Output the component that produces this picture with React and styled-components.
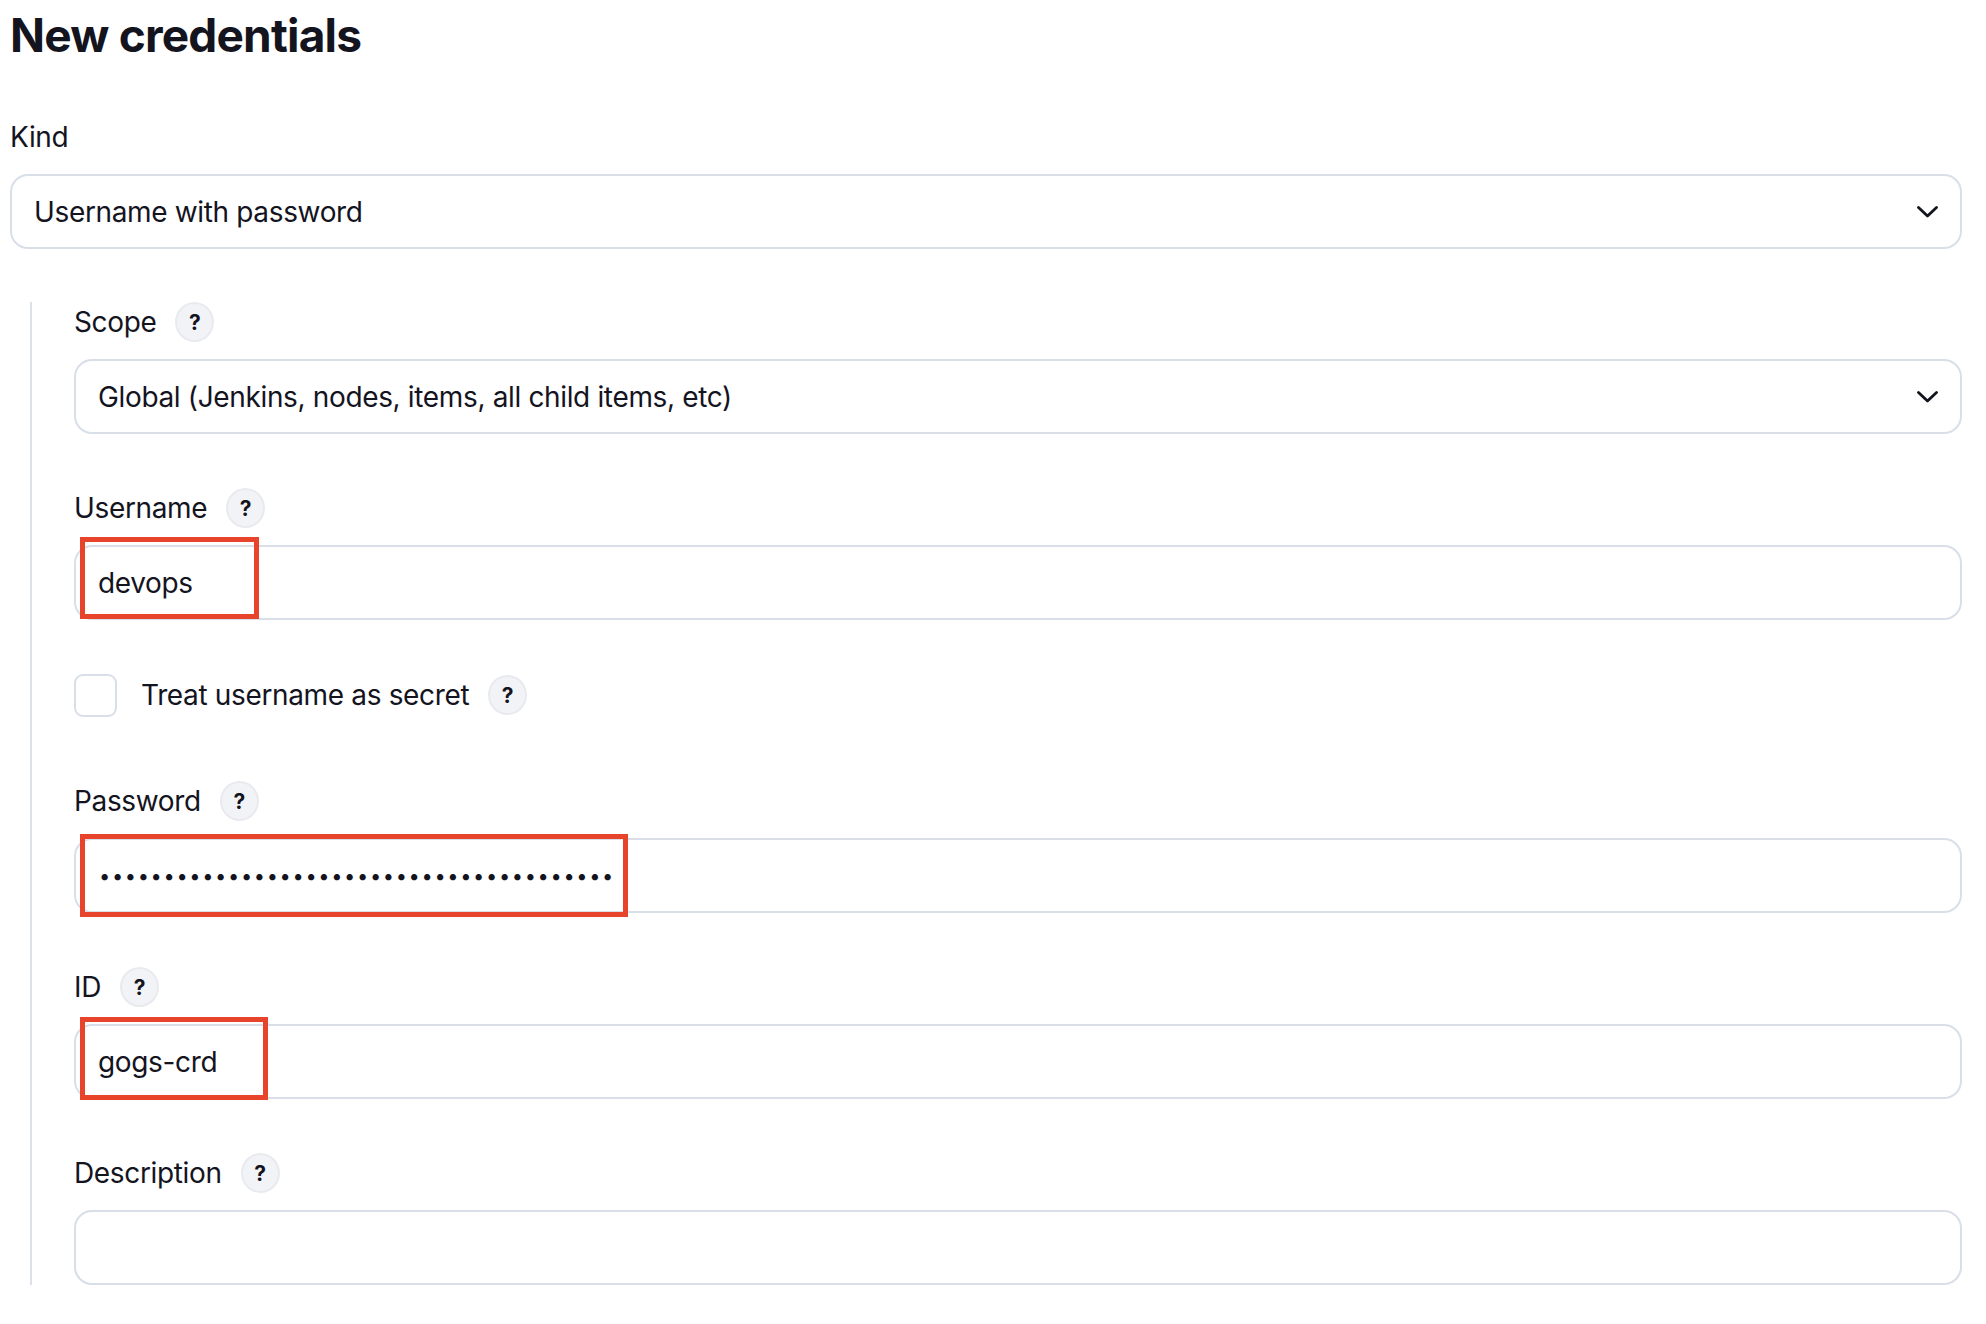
import React from 'react';
import styled, {createGlobalStyle} from 'styled-components';

const GlobalStyle = createGlobalStyle`
    html, body {
        margin: 0;
        padding: 0;
        background: #fff;
    }
    body {
        font-family: Inter, "Noto Sans", "Liberation Sans", sans-serif;
        color: #14141f;
        -webkit-font-smoothing: antialiased;
    }
    * {
        box-sizing: border-box;
    }
`

const Page = styled.main`
    padding: 7px 24px 40px 10px;
`
const Title = styled.h1`
    margin: 0 0 54px 0;
    font-size: 46px;
    font-weight: 700;
    line-height: 56px;
    letter-spacing: -0.8px;
`
const Field = styled.div`
    margin-bottom: ${props => props.gap || 54}px;
    &:last-child {
        margin-bottom: 0;
    }
`
const LabelRow = styled.div`
    display: flex;
    align-items: center;
    gap: 19px;
    height: 40px;
    margin-bottom: 17px;
    font-size: 28px;
    line-height: 40px;
    letter-spacing: -0.35px;
`
const HelpButton = styled.button`
    width: 39px;
    height: 40px;
    border-radius: 50%;
    border: 2px solid #e9eaef;
    background: #f2f3f6;
    color: #14141f;
    font-family: inherit;
    font-size: 21px;
    font-weight: 700;
    line-height: 1;
    padding: 0;
    display: flex;
    align-items: center;
    justify-content: center;
`
const SelectWrap = styled.div`
    position: relative;
`
const Select = styled.select`
    appearance: none;
    -webkit-appearance: none;
    width: 100%;
    height: 75px;
    border: 2px solid #d9dfe8;
    border-radius: 18px;
    background: #fff;
    padding: 0 60px 0 22px;
    font-family: inherit;
    font-size: 28px;
    letter-spacing: -0.35px;
    color: #14141f;
    outline: none;
`
const Chevron = styled.svg`
    position: absolute;
    right: 24px;
    top: 50%;
    margin-top: -6px;
    width: 21px;
    height: 12px;
    pointer-events: none;
`
const Nested = styled.section`
    margin-left: 20px;
    padding-left: 42px;
    border-left: 2px solid #dde2ea;
`
const InputWrap = styled.div`
    position: relative;
`
const TextInput = styled.input`
    display: block;
    width: 100%;
    height: 75px;
    border: 2px solid #d9dfe8;
    border-radius: 18px;
    background: #fff;
    padding: 0 22px;
    font-family: inherit;
    font-size: 28px;
    letter-spacing: -0.35px;
    color: #14141f;
    outline: none;
`
const PasswordInput = styled(TextInput)`
    font-size: 20px;
    letter-spacing: 1.65px;
    padding-left: 23px;
`
const Marker = styled.div`
    position: absolute;
    left: 6px;
    top: ${props => props.top}px;
    width: ${props => props.width}px;
    height: ${props => props.height}px;
    border: 5px solid #e8442c;
    pointer-events: none;
`
const CheckRow = styled.label`
    display: flex;
    align-items: center;
    height: 42px;
    font-size: 28px;
    letter-spacing: -0.35px;
`
const Checkbox = styled.input`
    appearance: none;
    -webkit-appearance: none;
    width: 43px;
    height: 43px;
    margin: 0 24px 0 0;
    border: 2px solid #d9dfe8;
    border-radius: 9px;
    background: #fff;
`
const CheckText = styled.span`
    margin-right: 19px;
`

const ChevronIcon = () => (
    <Chevron viewBox="0 0 21 12" fill="none">
        <polyline points="1.5,1.5 10.5,10 19.5,1.5" stroke="#14141f" strokeWidth="2.8" strokeLinecap="round" strokeLinejoin="round" />
    </Chevron>
);

const Label = ({text, help = true}) => (
    <LabelRow>
        <span>{text}</span>
        {help && <HelpButton type="button" aria-label={'Help for ' + text}>?</HelpButton>}
    </LabelRow>
);

export default function App() {
    return (
        <Page>
            <GlobalStyle />
            <Title>New credentials</Title>
            <Field gap={53}>
                <Label text="Kind" help={false} />
                <SelectWrap>
                    <Select defaultValue="up">
                        <option value="up">Username with password</option>
                    </Select>
                    <ChevronIcon />
                </SelectWrap>
            </Field>
            <Nested>
                <Field>
                    <Label text="Scope" />
                    <SelectWrap>
                        <Select defaultValue="global">
                            <option value="global">Global (Jenkins, nodes, items, all child items, etc)</option>
                        </Select>
                        <ChevronIcon />
                    </SelectWrap>
                </Field>
                <Field>
                    <Label text="Username" />
                    <InputWrap>
                        <TextInput type="text" defaultValue="devops" />
                        <Marker top={-8} width={179} height={82} />
                    </InputWrap>
                </Field>
                <Field gap={65}>
                    <CheckRow>
                        <Checkbox type="checkbox" />
                        <CheckText>Treat username as secret</CheckText>
                        <HelpButton type="button" aria-label="Help for Treat username as secret">?</HelpButton>
                    </CheckRow>
                </Field>
                <Field>
                    <Label text="Password" />
                    <InputWrap>
                        <PasswordInput type="password" defaultValue={'x'.repeat(40)} />
                        <Marker top={-4} width={548} height={83} />
                    </InputWrap>
                </Field>
                <Field>
                    <Label text="ID" />
                    <InputWrap>
                        <TextInput type="text" defaultValue="gogs-crd" />
                        <Marker top={-7} width={188} height={83} />
                    </InputWrap>
                </Field>
                <Field>
                    <Label text="Description" />
                    <TextInput type="text" defaultValue="" />
                </Field>
            </Nested>
        </Page>
    );
}
